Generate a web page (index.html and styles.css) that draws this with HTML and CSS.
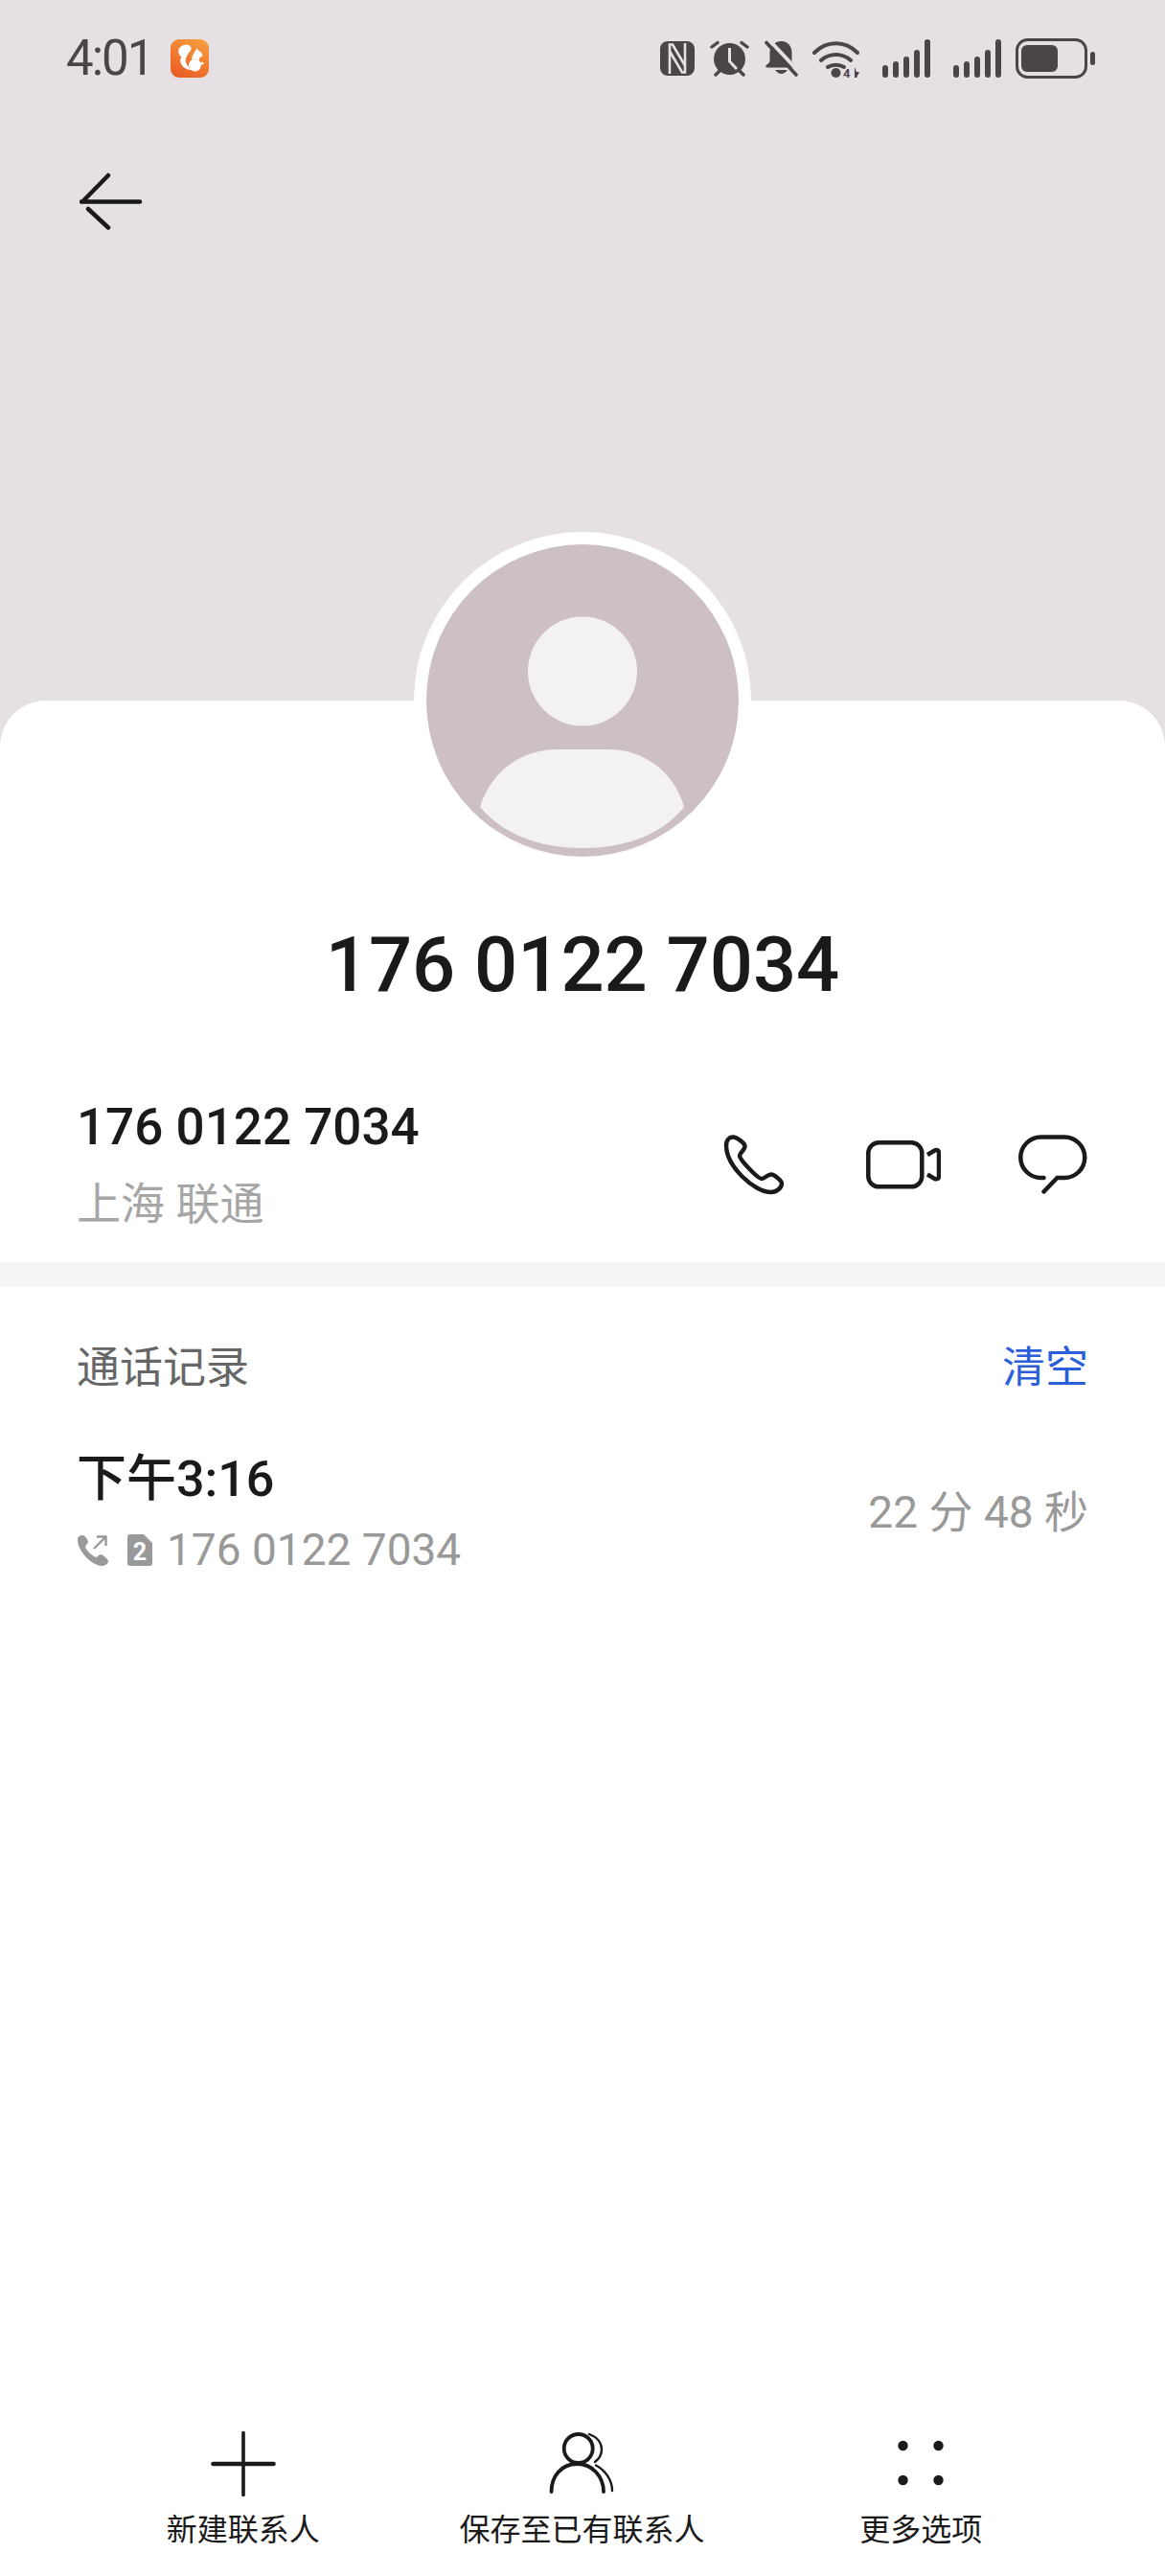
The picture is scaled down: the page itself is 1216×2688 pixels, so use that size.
FILE: index.html
```html
<!DOCTYPE html>
<html lang="zh">
<head>
<meta charset="utf-8">
<title>通话详情</title>
<link rel="stylesheet" href="styles.css">
</head>
<body>
<div class="page">
  <header class="hero">
    <div class="status">
      <span class="clock">4:01</span>
      <svg class="app-badge" viewBox="0 0 40 40">
        <defs><linearGradient id="uc" x1="0.8" y1="0" x2="0.3" y2="1"><stop offset="0" stop-color="#f79d3e"/><stop offset="1" stop-color="#ea5f25"/></linearGradient></defs>
        <rect width="40" height="40" rx="9" fill="url(#uc)"/>
        <path d="M14 6c4-1.500 7 .5 7.500 3 .5 2.500-2 4-3 6-2 3-3.500 6-2.500 9 1 3.500 4 6.500 7 8-5 .5-10-2-12-6.500-1.500-3-1-5 .5-7-3-2-4-6-2.500-9 1-2 3-3 5-3.500z" fill="#fff"/>
        <path d="M27 9l2.500 3c2.500 1 4 3 4 5.500l-3 1.500c-.5 1.500-.5 2-1 3-2-1.500-5-2-7.500-1 .5-4 3-8 6-12z" fill="#fff"/>
        <circle cx="25.500" cy="27" r="6.500" fill="#fff"/>
        <circle cx="33" cy="25" r="1.500" fill="#fff"/>
      </svg>
      <div class="status-icons">
        <svg class="ic-nfc" viewBox="0 0 36 36">
          <rect width="36" height="36" rx="8" fill="#4a4648"/>
          <path d="M10 34V3.500H13L26 25.500M26 2V32.500H23L10 10.500" fill="none" stroke="#e6dfe4" stroke-width="2.600"/>
        </svg>
        <svg class="ic-alarm" viewBox="0 0 41 38">
          <circle cx="20.500" cy="19.500" r="16.500" fill="#4a4648"/>
          <path d="M2 7L8 2.500M39 7L33 2.500M6 36L10 32M35 36L31 32" stroke="#4a4648" stroke-width="3.400" stroke-linecap="round"/>
          <path d="M20.500 8V22L28 30" fill="none" stroke="#e6dfe4" stroke-width="3"/>
        </svg>
        <svg class="ic-bell" viewBox="0 0 35 39">
          <path d="M17.500 1c7 0 11 5 11 12v9l5 6.500H1.500V26q4-2 4-5V13c0-7 5-12 12-12z" fill="#4a4648"/>
          <path d="M11 31q6.500 8 13 0z" fill="#4a4648"/>
          <path d="M4 -1L37 34" stroke="#e6dfe4" stroke-width="4"/>
          <path d="M2 2.500L33 36" stroke="#4a4648" stroke-width="3.600" stroke-linecap="round"/>
        </svg>
        <svg class="ic-wifi" viewBox="0 0 49 43">
          <path d="M2 13c13-13 32-13 45 0M9 21c9-8 22-8 31 0M16 28c5-3 12-3 17 0" fill="none" stroke="#4a4648" stroke-width="4" stroke-linecap="round"/>
          <circle cx="24.500" cy="34" r="5" fill="#4a4648"/>
          <text class="wifi-four" x="32" y="39">4</text>
          <path d="M44 28v11h2l3-6h-3z" fill="#4a4648"/>
        </svg>
        <svg class="ic-signal" viewBox="0 0 50 40">
          <rect x="0" y="27" width="6" height="13" rx="3"/><rect x="11" y="23" width="6" height="17" rx="3"/><rect x="22" y="18" width="6" height="22" rx="3"/><rect x="33" y="11" width="6" height="29" rx="3"/><rect x="44" y="0" width="6" height="40" rx="3"/>
        </svg>
        <svg class="ic-signal" viewBox="0 0 50 40">
          <rect x="0" y="27" width="6" height="13" rx="3"/><rect x="11" y="23" width="6" height="17" rx="3"/><rect x="22" y="18" width="6" height="22" rx="3"/><rect x="33" y="11" width="6" height="29" rx="3"/><rect x="44" y="0" width="6" height="40" rx="3"/>
        </svg>
        <svg class="ic-battery" viewBox="0 0 83 42">
          <rect x="1.500" y="1.500" width="72" height="39" rx="11" fill="none" stroke="#4a4648" stroke-width="3"/>
          <rect x="6" y="7" width="38" height="28" rx="6" fill="#4a4648"/>
          <rect x="78" y="14" width="5" height="14" rx="2.500" fill="#4a4648"/>
        </svg>
      </div>
    </div>
    <svg class="back" viewBox="0 0 66 60">
      <path d="M2 30.500H63M30 3L3 30.500" fill="none" stroke="#1a1a1a" stroke-width="4.500" stroke-linecap="round"/>
      <path d="M9 38L30 57.500" fill="none" stroke="#1a1a1a" stroke-width="4.500" stroke-linecap="round"/>
    </svg>
  </header>

  <main class="card">
    <div class="avatar">
      <svg class="avatar-art" viewBox="0 0 326 326">
        <circle cx="163" cy="163" r="163" fill="#cdc0c5"/>
        <circle cx="163" cy="132.500" r="57" fill="#f3f1f3"/>
        <path d="M56 274C68 236 100 214 136 214H190C226 214 258 236 269 274C245 304 206 317 163 317C120 317 81 304 56 274Z" fill="#f3f1f3"/>
      </svg>
    </div>
    <h1 class="title">176 0122 7034</h1>

    <section class="number-row">
      <div class="number-text">
        <div class="number">176 0122 7034</div>
        <div class="carrier">上海 联通</div>
      </div>
      <div class="actions">
        <svg class="ic-phone" viewBox="0 0 68 64">
          <path d="M10 3.500C7 3.500 3 6 3 12C3 34 32 61 50 61C56 61 61 56 61 52C61 49 53 42.500 50 42.500C46 42.500 43 47 40 47C36 47 17 27 17 23C17 20 22.500 17 22.500 13C22.500 10 14 3.500 10 3.500Z" fill="none" stroke="#1a1a1a" stroke-width="4.500" stroke-linejoin="round"/>
        </svg>
        <svg class="ic-video" viewBox="0 0 78 51">
          <rect x="2.300" y="2.300" width="56" height="46" rx="11" fill="none" stroke="#1a1a1a" stroke-width="4.500"/>
          <path d="M64 15L71.500 10.500Q76 9 76 13V37Q76 41.500 71.500 40L64 35.500" fill="none" stroke="#1a1a1a" stroke-width="4.500"/>
        </svg>
        <svg class="ic-bubble" viewBox="0 0 72 62">
          <path d="M26.500 45H23.500A21.250 21.250 0 0 1 23.500 2.500H48A21.250 21.250 0 0 1 48 45H40.500L26.500 59.500" fill="none" stroke="#1a1a1a" stroke-width="4.500" stroke-linecap="round"/>
        </svg>
      </div>
    </section>

    <div class="band"></div>

    <section class="log">
      <div class="log-head">
        <span class="log-title">通话记录</span>
        <span class="log-clear">清空</span>
      </div>
      <div class="call">
        <div class="call-main">
          <div class="call-time">下午3:16</div>
          <div class="call-sub">
            <svg class="ic-out" viewBox="0 0 32 33">
              <path d="M5 1C8 1 11 6 11 8C11 10 8 11 8 13C9 17 15 22 19 24C21 24 22 21 24 21C26 21 32 26 32 28C32 31 28 33 25 33C14 32 0 17 0 6C0 3 2 1 5 1Z" fill="#999"/>
              <path d="M17 15L29 3M20 2.500H29.500V12" fill="none" stroke="#999" stroke-width="2.400"/>
            </svg>
            <svg class="ic-sim" viewBox="0 0 26 33">
              <path d="M3 0H17L26 9V30Q26 33 23 33H3Q0 33 0 30V3Q0 0 3 0Z" fill="#999"/>
              <text class="sim-two" x="13" y="27">2</text>
            </svg>
            <span class="call-number">176 0122 7034</span>
          </div>
        </div>
        <div class="call-duration">22 分 48 秒</div>
      </div>
    </section>

    <nav class="toolbar">
      <div class="tool">
        <svg class="tool-icon" viewBox="0 0 70 70">
          <path d="M35 2.500V67.500" stroke="#1a1a1a" stroke-width="3.600" stroke-linecap="round"/>
          <path d="M3.500 35H66.500" stroke="#1a1a1a" stroke-width="4.600" stroke-linecap="round"/>
        </svg>
        <span class="tool-label">新建联系人</span>
      </div>
      <div class="tool">
        <svg class="tool-icon" viewBox="0 0 70 70">
          <circle cx="31.700" cy="19" r="15" fill="none" stroke="#1a1a1a" stroke-width="3.800"/>
          <path d="M3.500 64C3.500 48 14 35 30.500 35C46 35 58 48 58 64" fill="none" stroke="#1a1a1a" stroke-width="3.800" stroke-linecap="round"/>
          <path d="M43 4C51 7 56 13 56 20C56 25 53 30 49 33M50 36.500C60 42 67 52 67 63" fill="none" stroke="#1a1a1a" stroke-width="2.400" stroke-linecap="round"/>
        </svg>
        <span class="tool-label">保存至已有联系人</span>
      </div>
      <div class="tool">
        <svg class="tool-icon" viewBox="0 0 70 70">
          <circle cx="16.500" cy="16" r="5.200" fill="#1a1a1a"/><circle cx="53.500" cy="16" r="5.200" fill="#1a1a1a"/>
          <circle cx="16.500" cy="52" r="5.200" fill="#1a1a1a"/><circle cx="53.500" cy="52" r="5.200" fill="#1a1a1a"/>
        </svg>
        <span class="tool-label">更多选项</span>
      </div>
    </nav>
  </main>
</div>
</body>
</html>
```
FILE: styles.css
```css
* { box-sizing: border-box; }
html, body { margin: 0; padding: 0; }
body {
  width: 1216px;
  height: 2688px;
  font-family: Roboto, "Noto Sans CJK SC", sans-serif;
  color: #1a1a1a;
  background: #e6dfe4;
}
.page { display: flex; flex-direction: column; height: 100%; }
.hero { height: 731px; flex: none; display: flex; flex-direction: column; }

.status { display: flex; align-items: center; height: 42px; margin-top: 40px; padding-left: 69px; }
.clock { font-size: 51px; line-height: 42px; letter-spacing: -2px; color: #4a4648; width: 109px; flex: none; }
.app-badge { width: 40px; height: 40px; flex: none; }
.status-icons { display: flex; align-items: center; gap: 16px; margin-left: 471px; }
.ic-nfc { width: 36px; height: 36px; }
.ic-alarm { width: 41px; height: 38px; }
.ic-bell { width: 35px; height: 39px; }
.ic-wifi { width: 49px; height: 43px; margin: 4px 0 0 -1px; }
.ic-signal { width: 50px; height: 40px; fill: #4a4648; margin-left: 8px; }
.ic-battery { width: 83px; height: 42px; margin-left: -1px; }
.wifi-four { font-size: 13px; font-weight: 700; fill: #4a4648; }

.back { width: 66px; height: 60px; margin: 98px 0 0 83px; }

.card {
  flex: 1;
  display: flex;
  flex-direction: column;
  background: #fff;
  border-radius: 48px 48px 0 0;
  min-height: 0;
}
.avatar {
  width: 352px;
  height: 352px;
  margin: -176px auto 0;
  padding: 13px;
  border-radius: 50%;
  background: #fff;
  flex: none;
}
.avatar-art { display: block; width: 326px; height: 326px; }

.title { margin: 60px 0 0; font-size: 79.500px; line-height: 80px; font-weight: 500; text-align: center; }

.number-row { display: flex; justify-content: space-between; align-items: center; padding: 99px 81px 33px 80px; }
.number { font-size: 53px; line-height: 60px; font-weight: 500; }
.carrier { font-size: 46px; line-height: 56px; margin-top: 22px; color: #a6a6a6; }
.actions { display: flex; align-items: center; gap: 81px; }
.ic-phone { width: 68px; height: 64px; }
.ic-video { width: 78px; height: 51px; }
.ic-bubble { width: 72px; height: 62px; }

.band { height: 26px; background: #f5f5f5; flex: none; }

.log { padding: 57px 80px 0; }
.log-head { display: flex; justify-content: space-between; line-height: 56px; font-size: 45px; }
.log-title { color: #666; }
.log-clear { color: #2a5fd8; }
.call { display: flex; justify-content: space-between; align-items: center; margin-top: 58px; }
.call-time { font-size: 52px; line-height: 60px; font-weight: 500; }
.call-sub { display: flex; align-items: center; margin-top: 18px; height: 50px; }
.ic-out { width: 32px; height: 33px; margin: 0 20px 0 1px; }
.ic-sim { width: 26px; height: 33px; margin-right: 15px; }
.sim-two { font-size: 25px; font-weight: 700; fill: #fff; text-anchor: middle; }
.call-number { font-size: 46px; line-height: 50px; color: #999; }
.call-duration { font-size: 46px; line-height: 56px; color: #999; }

.toolbar { margin-top: auto; display: grid; grid-template-columns: repeat(3, 1fr); padding: 0 78px 28px 77px; }
.tool { display: flex; flex-direction: column; align-items: center; }
.tool-icon { width: 70px; height: 70px; }
.tool-label { font-size: 32px; line-height: 40px; margin-top: 14px; white-space: nowrap; }
```
